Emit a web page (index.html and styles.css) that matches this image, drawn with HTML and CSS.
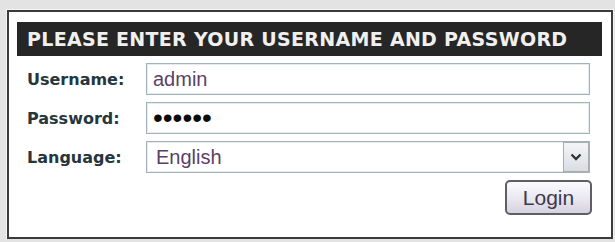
FILE: index.html
```html
<!DOCTYPE html>
<html lang="en">
<head>
    <meta charset="UTF-8">
    <meta name="viewport" content="width=device-width, initial-scale=1.0">
    <title>login</title>
    <link rel="stylesheet" href="styles.css">
</head>
<body>
    <div class="panel">
        <div class="panel-title">PLEASE ENTER YOUR USERNAME AND PASSWORD</div>
        <form class="login-form" onsubmit="return false">
            <label class="field-label" for="user">Username:</label>
            <input class="field-input" id="user" type="text" value="admin">

            <label class="field-label" for="pass">Password:</label>
            <input class="field-input field-pass" id="pass" type="password" value="admin1">

            <label class="field-label" for="lang">Language:</label>
            <div class="select-wrap">
                <select class="field-input field-select" id="lang">
                    <option>English</option>
                </select>
                <span class="select-arrow">
                    <svg width="12" height="8" viewBox="0 0 12 8">
                        <path d="M1.5 1.5 L6 6 L10.5 1.5" fill="none" stroke="#333" stroke-width="2.4"/>
                    </svg>
                </span>
            </div>

            <div class="form-footer">
                <button class="login-button" type="submit">Login</button>
            </div>
        </form>
    </div>
</body>
</html>
```

FILE: styles.css
```css
body {
    margin: 0;
    padding: 10px 2px 0 7px;
    background-color: #e3e3e3;
}

.panel {
    box-sizing: border-box;
    height: 229px;
    padding: 10px 9px 0 8px;
    background-color: #fff;
    border: 2px solid #3a3a3a;
    box-shadow: 0 0 0 1px #f4f4f4;
}

.panel-title {
    height: 34px;
    line-height: 35px;
    padding-left: 10px;
    background-color: #262626;
    color: #f0f0f0;
    font-family: "DejaVu Sans", sans-serif;
    font-weight: bold;
    font-size: 19px;
    letter-spacing: 0.3px;
    white-space: nowrap;
}

.login-form {
    display: grid;
    grid-template-columns: 129px 1fr;
    row-gap: 7px;
    align-items: center;
    margin: 7px 12px 0 0;
}

.field-label {
    padding-left: 10px;
    color: #26363c;
    font-family: "DejaVu Sans", sans-serif;
    font-weight: bold;
    font-size: 16px;
}

.field-input {
    box-sizing: border-box;
    width: 100%;
    height: 32px;
    margin: 0;
    padding: 0 6px;
    border: 1px solid #a3b3ba;
    box-shadow: inset 0 0 0 1px #e4ecef;
    background-color: #fff;
    color: #5a3f68;
    font-family: "Liberation Sans", Arial, sans-serif;
    font-size: 20px;
    outline: none;
}

.field-pass {
    color: #0c0c0c;
    font-size: 28px;
    letter-spacing: 0;
}

.select-wrap {
    position: relative;
}

.field-select {
    appearance: none;
    -webkit-appearance: none;
    padding-left: 9px;
    border-radius: 0;
}

.select-arrow {
    position: absolute;
    top: 1px;
    right: 1px;
    bottom: 1px;
    width: 26px;
    display: flex;
    align-items: center;
    justify-content: center;
    box-sizing: border-box;
    border: 1px solid #a6aeb4;
    background: linear-gradient(#f4f5f7, #d9dde2);
    pointer-events: none;
}

.form-footer {
    grid-column: 1 / 3;
    display: flex;
    justify-content: flex-end;
    margin-right: -2px;
}

.login-button {
    width: 87px;
    height: 35px;
    padding: 0;
    border: 2px solid #5e5e66;
    border-radius: 5px;
    background: linear-gradient(#fbfbfd, #e9e7ef 55%, #d6d2e0);
    color: #3c3a4c;
    font-family: "Liberation Sans", Arial, sans-serif;
    font-size: 21px;
}
```
